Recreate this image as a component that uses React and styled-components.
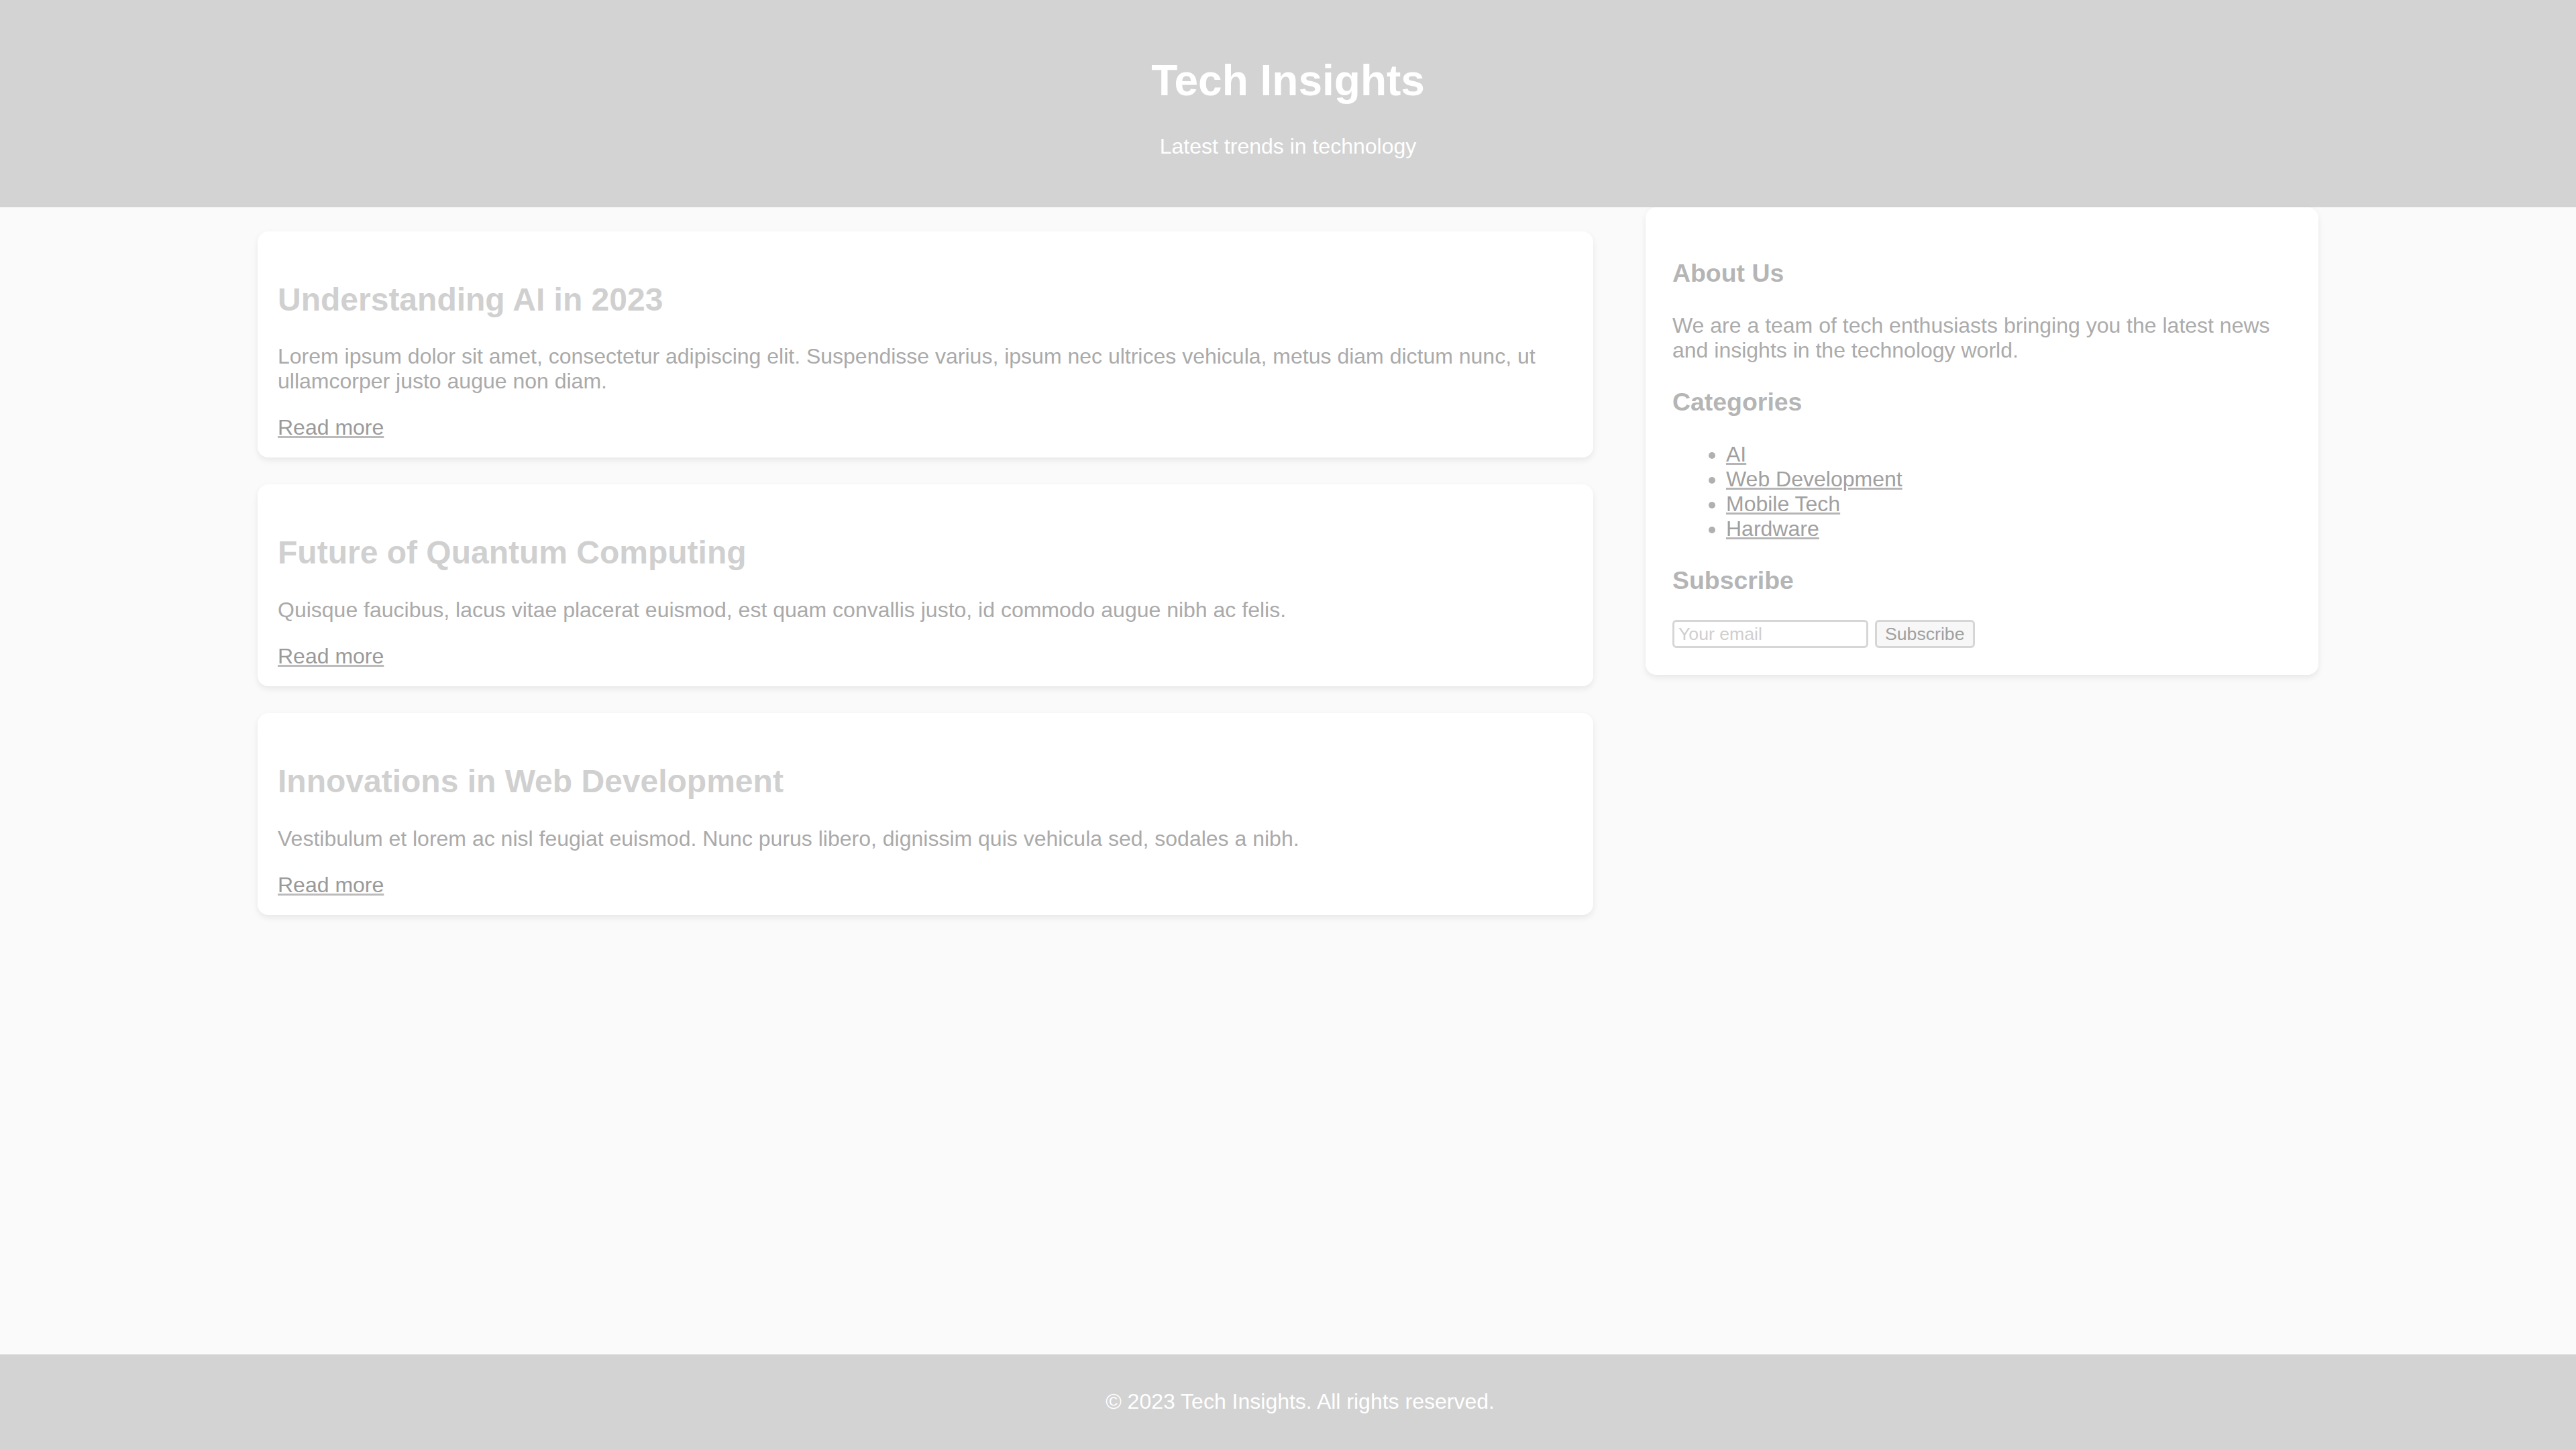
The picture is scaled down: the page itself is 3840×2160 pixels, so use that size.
import React from 'react';
import styled, { createGlobalStyle } from 'styled-components';

const GlobalStyle = createGlobalStyle`
  html,
  body {
    margin: 0;
    padding: 0;
  }

  body {
    background-color: #fafafa;
    font-family: 'Liberation Sans', Arial, sans-serif;
    font-size: 32px;
  }
`;

const Page = styled.div`
  display: flex;
  flex-direction: column;
  min-height: 100vh;
`;

const Header = styled.header`
  background-color: #d3d3d3;
  color: #ffffff;
  text-align: center;
  padding: 40px;
`;

const SiteTitle = styled.h1`
  font-size: 64px;
  font-weight: bold;
  margin: 42.88px 0;
`;

const Tagline = styled.p`
  font-size: 32px;
  margin: 32px 0;
`;

const Layout = styled.div`
  flex: 1;
  display: grid;
  grid-template-columns: 1.985fr 1fr;
  align-items: start;
  column-gap: 78px;
  width: 80%;
  margin: 0 auto;
`;

const Posts = styled.main`
  min-width: 0;
  padding-top: 36px;
`;

const PostCard = styled.article`
  background-color: #ffffff;
  border-radius: 16px;
  box-shadow: 0 4px 10px rgba(0, 0, 0, 0.08);
  padding: 34px 30px 26px;
  margin-bottom: 40px;
`;

const PostTitle = styled.h2`
  color: #d0d0d0;
  font-size: 48px;
  margin: 39.84px 0;
`;

const PostExcerpt = styled.p`
  color: #aaaaaa;
  margin: 32px 0;
`;

const ReadMore = styled.a`
  color: #9a9a9a;
  text-decoration: underline;
  text-decoration-color: #bbbbbb;
  text-decoration-thickness: 3px;
`;

const Sidebar = styled.aside`
  min-width: 0;
  background-color: #ffffff;
  border-radius: 16px;
  box-shadow: 0 4px 10px rgba(0, 0, 0, 0.08);
  padding: 40px;
`;

const WidgetTitle = styled.h3`
  color: #b5b5b5;
  font-size: 37.44px;
  margin: 37.44px 0;
`;

const WidgetText = styled.p`
  color: #ababab;
  margin: 32px 0;
`;

const CategoryList = styled.ul`
  color: #b0b0b0;
  margin: 32px 0;
  padding-left: 80px;
`;

const CategoryLink = styled.a`
  color: #a0a0a0;
  text-decoration: underline;
  text-decoration-color: #b5b5b5;
  text-decoration-thickness: 3px;
`;

const SubscribeForm = styled.form`
  display: flex;
  align-items: center;
  gap: 10px;
`;

const EmailInput = styled.input`
  box-sizing: border-box;
  width: 292px;
  height: 42px;
  padding: 2px 6px;
  border: 3px solid #d6d6d6;
  border-radius: 6px;
  background-color: #ffffff;
  font-family: 'Liberation Sans', Arial, sans-serif;
  font-size: 26.67px;

  &::placeholder {
    color: #cfcfcf;
  }
`;

const SubscribeButton = styled.button`
  box-sizing: border-box;
  height: 42px;
  padding: 2px 12px;
  border: 3px solid #d6d6d6;
  border-radius: 6px;
  background-color: #f7f7f7;
  color: #a0a0a0;
  font-family: 'Liberation Sans', Arial, sans-serif;
  font-size: 26.67px;
`;

const Footer = styled.footer`
  background-color: #d3d3d3;
  color: #ffffff;
  text-align: center;
  padding: 20px 20px 20px 56px;
`;

const FooterText = styled.p`
  margin: 32px 0;
`;

const posts = [
  {
    title: 'Understanding AI in 2023',
    excerpt:
      'Lorem ipsum dolor sit amet, consectetur adipiscing elit. Suspendisse varius, ipsum nec ultrices vehicula, metus diam dictum nunc, ut ullamcorper justo augue non diam.',
  },
  {
    title: 'Future of Quantum Computing',
    excerpt:
      'Quisque faucibus, lacus vitae placerat euismod, est quam convallis justo, id commodo augue nibh ac felis.',
  },
  {
    title: 'Innovations in Web Development',
    excerpt:
      'Vestibulum et lorem ac nisl feugiat euismod. Nunc purus libero, dignissim quis vehicula sed, sodales a nibh.',
  },
];

const categories = ['AI', 'Web Development', 'Mobile Tech', 'Hardware'];

export default function App() {
  return (
    <>
      <GlobalStyle />
      <Page>
        <Header>
          <SiteTitle>Tech Insights</SiteTitle>
          <Tagline>Latest trends in technology</Tagline>
        </Header>

        <Layout>
          <Posts>
            {posts.map((post) => (
              <PostCard key={post.title}>
                <PostTitle>{post.title}</PostTitle>
                <PostExcerpt>{post.excerpt}</PostExcerpt>
                <ReadMore href="#">Read more</ReadMore>
              </PostCard>
            ))}
          </Posts>

          <Sidebar>
            <WidgetTitle>About Us</WidgetTitle>
            <WidgetText>
              We are a team of tech enthusiasts bringing you the latest news and insights in the
              technology world.
            </WidgetText>

            <WidgetTitle>Categories</WidgetTitle>
            <CategoryList>
              {categories.map((name) => (
                <li key={name}>
                  <CategoryLink href="#">{name}</CategoryLink>
                </li>
              ))}
            </CategoryList>

            <WidgetTitle>Subscribe</WidgetTitle>
            <SubscribeForm onSubmit={(e) => e.preventDefault()}>
              <EmailInput type="email" placeholder="Your email" />
              <SubscribeButton type="submit">Subscribe</SubscribeButton>
            </SubscribeForm>
          </Sidebar>
        </Layout>

        <Footer>
          <FooterText>&copy; 2023 Tech Insights. All rights reserved.</FooterText>
        </Footer>
      </Page>
    </>
  );
}
